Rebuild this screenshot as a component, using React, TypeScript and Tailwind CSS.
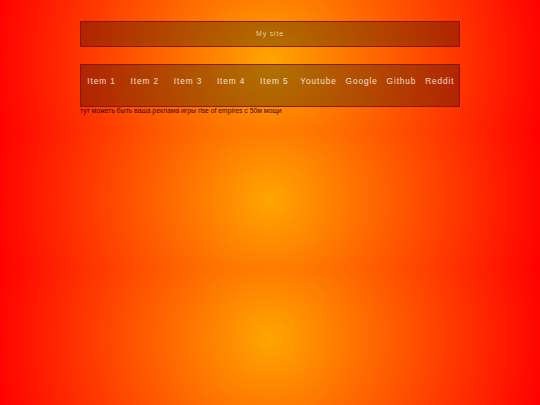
const NAV_ITEMS = ["Item 1", "Item 2", "Item 3", "Item 4", "Item 5"];
const LINKS = ["Youtube", "Google", "Github", "Reddit"];

export default function App() {
  return (
    <div
      className="h-[405px] w-full bg-[radial-gradient(circle,#ffa500,#ff0000)] bg-size-[100%_138px] bg-position-[0_-7px] bg-repeat"
      style={{ fontFamily: '"Liberation Sans", Arial, "Noto Sans", sans-serif' }}
    >
      <div className="mx-auto w-[380px] pt-[21px]">
        <header className="flex h-[26px] items-center justify-center border border-[#7a1200]/80 bg-black/30">
          <span className="text-[7px] tracking-[0.8px] text-[#f3d7b0]/90">My site</span>
        </header>

        <nav className="mt-[17px] h-[43px] border border-[#7a1200]/80 bg-black/30 pl-[3.4px] pt-[11px]">
          <ul className="flex gap-[8.8px] text-[8.3px] leading-[10px] tracking-[0.9px] text-white/80 whitespace-nowrap">
            {NAV_ITEMS.map((item) => (
              <li key={item} className="w-[34.4px] text-center">
                {item}
              </li>
            ))}
            {LINKS.map((item) => (
              <li key={item}>{item}</li>
            ))}
          </ul>
        </nav>

        <p className="text-[6.8px] leading-[8px] text-[#3a0800]">
          тут можеть быть ваша реклама игры rise of empires с 50м мощи
        </p>
      </div>
    </div>
  );
}
